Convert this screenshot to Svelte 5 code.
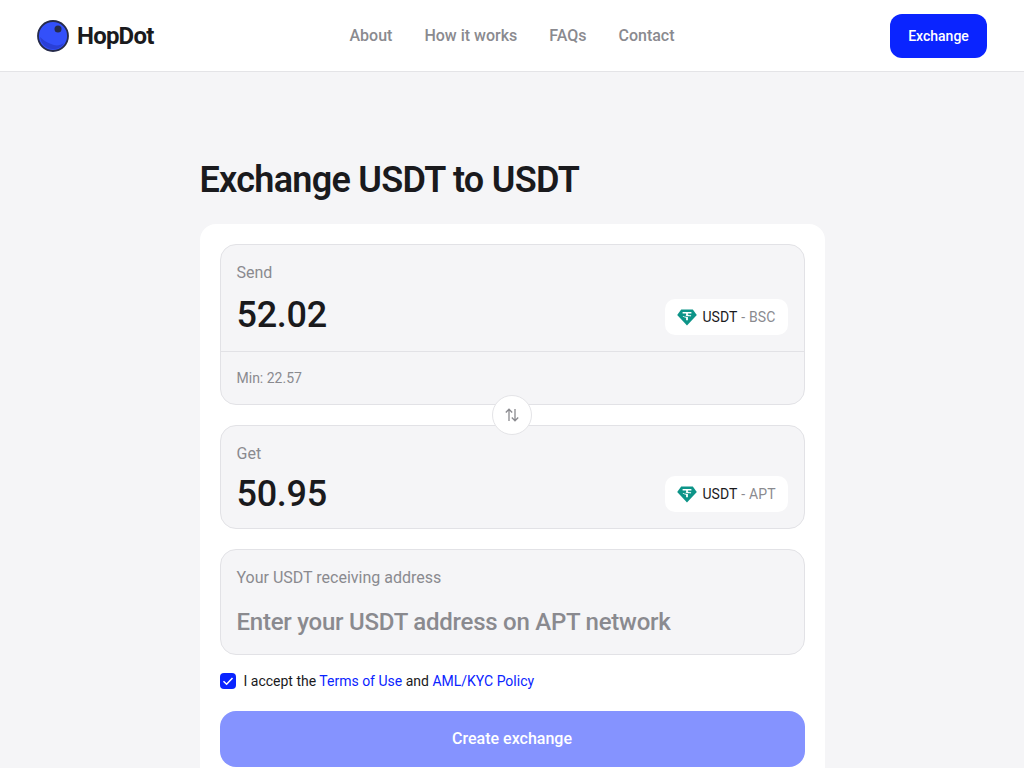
<script lang="ts">
	const nav = ["About", "How it works", "FAQs", "Contact"];
</script>

{#snippet tether()}
	<svg class="coin" viewBox="0 0 20 17" width="20" height="17">
		<path d="M4.2 .5h11.6l4 5.6L10 16.6.2 6.1z" fill="#0d9488" />
		<path
			d="M5.6 3h8.8v1.500h-3.500v1.200c1.900.1 3.400.5 3.400 1s-1.500.9-3.400 1v3.600H9.100V8.700c-1.900-.1-3.400-.5-3.400-1s1.500-.9 3.400-1V4.500H5.600z"
			fill="#fff"
		/>
		<path d="M6.800 7.100c.7.300 1.900.4 3.200.4s2.500-.1 3.200-.4" fill="none" stroke="#0d9488" stroke-width=".8" />
	</svg>
{/snippet}

<header>
	<a class="logo" href="#top">
		<svg viewBox="0 0 32 32" width="32" height="32">
			<circle cx="16" cy="16" r="15" fill="#3350fa" stroke="#262b4a" stroke-width="1.800" />
			<path d="M3 17c1 7 6 12 13 12 5 0 9-2 11-6-4 3-9 3-13 1-5-2-8-4-11-7z" fill="#2a3fd6" />
			<circle cx="21" cy="9" r="3.500" fill="#262b4a" />
		</svg>
		<span>HopDot</span>
	</a>
	<nav>
		{#each nav as item}
			<a href="#top">{item}</a>
		{/each}
	</nav>
	<button class="cta" type="button">Exchange</button>
</header>

<main>
	<h1>Exchange USDT to USDT</h1>
	<section class="card">
		<div class="box send">
			<div class="top">
				<label for="send">Send</label>
				<div class="row">
					<input id="send" value="52.02" />
					<button class="token" type="button">
						{@render tether()}
						<span>USDT</span><em>- BSC</em>
					</button>
				</div>
			</div>
			<div class="min">Min: 22.57</div>
		</div>

		<div class="swap-wrap">
			<button class="swap" type="button" aria-label="Swap">
				<svg viewBox="0 0 16 16" width="16" height="16" fill="none" stroke="#8a8a8f" stroke-width="1.300">
					<path d="M5 14V2.500M1.800 5.500 5 2.200l3.200 3.300" />
					<path d="M11 2v11.500M7.800 10.500l3.200 3.300 3.200-3.300" />
				</svg>
			</button>
		</div>

		<div class="box get">
			<label for="get">Get</label>
			<div class="row">
				<input id="get" value="50.95" />
				<button class="token" type="button">
					{@render tether()}
					<span>USDT</span><em>- APT</em>
				</button>
			</div>
		</div>

		<div class="box address">
			<label for="address">Your USDT receiving address</label>
			<input id="address" placeholder="Enter your USDT address on APT network" />
		</div>

		<div class="accept">
			<span class="check">
				<svg viewBox="0 0 16 16" width="16" height="16" fill="none" stroke="#fff" stroke-width="1.500">
					<path d="M3.500 8.300 6.600 11.200 12.500 5" />
				</svg>
			</span>
			<p>I accept the <a href="#top">Terms of Use</a> and <a href="#top">AML/KYC Policy</a></p>
		</div>

		<button class="submit" type="button">Create exchange</button>
	</section>
</main>

<style>
	:global(body) {
		background: #f5f5f7;
		font-family: Roboto, "Liberation Sans", sans-serif;
		color: #1a1a1d;
	}

	header {
		display: flex;
		align-items: center;
		justify-content: space-between;
		height: 71px;
		padding: 0 37px;
		background: #fff;
		border-bottom: 1px solid #e4e4e7;
		position: relative;
	}

	.logo {
		display: flex;
		align-items: center;
		gap: 8px;
		color: #1a1a1d;
		text-decoration: none;
		font-size: 24px;
		font-weight: 700;
		letter-spacing: -0.8px;
	}

	nav {
		position: absolute;
		left: 349.5px;
		top: 0;
		height: 71px;
		display: flex;
		align-items: center;
		gap: 32px;
		a {
			color: #8a8a8f;
			text-decoration: none;
			font-size: 16px;
			font-weight: 500;
		}
	}

	.cta {
		width: 97px;
		height: 44px;
		background: #0a24ff;
		color: #fff;
		border: 0;
		border-radius: 12px;
		font: 500 14px Roboto, sans-serif;
	}

	main {
		width: 625px;
		margin: 0 auto;
		padding: 86px 0 40px;
	}

	h1 {
		margin: 0 0 22px;
		font-size: 36px;
		line-height: 44px;
		font-weight: 600;
		letter-spacing: -0.72px;
	}

	.card {
		background: #fff;
		border-radius: 16px;
		padding: 20px;
		display: flex;
		flex-direction: column;
	}

	.box {
		background: #f5f5f7;
		border: 1px solid #e2e2e6;
		border-radius: 16px;
		label {
			display: block;
			color: #8a8a8f;
			font-size: 16px;
			line-height: 20px;
		}
		input {
			display: block;
			min-width: 0;
			flex: 1;
			border: 0;
			padding: 0;
			outline: 0;
			background: transparent;
			font-family: inherit;
			color: #1a1a1d;
		}
	}

	.row {
		display: flex;
		align-items: center;
		justify-content: space-between;
		input {
			font-size: 36px;
			font-weight: 500;
			height: 44px;
			letter-spacing: -0.3px;
		}
	}

	.send .top {
		padding: 18px 16px 16px;
		height: 107px;
		box-sizing: border-box;
		border-bottom: 1px solid #e2e2e6;
		.row {
			margin-top: 10px;
		}
		.token {
			top: 2px;
		}
	}

	.min {
		padding: 18px 16px 0;
		height: 52px;
		box-sizing: border-box;
		font-size: 14px;
		line-height: 16px;
		color: #8a8a8f;
	}

	.get {
		padding: 18px 16px 14px;
		height: 104px;
		box-sizing: border-box;
		.row {
			margin-top: 8px;
		}
	}

	.token {
		display: flex;
		align-items: center;
		height: 36px;
		width: 123px;
		padding: 0 12px;
		background: #fff;
		border: 0;
		border-radius: 10px;
		font: 400 14px Roboto, sans-serif;
		color: #1a1a1d;
		white-space: nowrap;
		position: relative;
		em {
			font-style: normal;
			color: #8a8a8f;
			margin-left: 4px;
			letter-spacing: 0.15px;
		}
	}

	.coin {
		flex: none;
		margin-right: 6px;
	}

	.swap-wrap {
		height: 20px;
		display: flex;
		align-items: center;
		justify-content: center;
		position: relative;
		z-index: 1;
	}

	.swap {
		width: 40px;
		height: 40px;
		flex: none;
		display: flex;
		align-items: center;
		justify-content: center;
		padding: 0;
		background: #fff;
		border: 1px solid #e4e4e7;
		border-radius: 50%;
	}

	.address {
		margin-top: 20px;
		height: 106px;
		box-sizing: border-box;
		padding: 18px 16px 0;
		input {
			width: 100%;
			height: 32px;
			margin-top: 18px;
			font-size: 24px;
			font-weight: 500;
			letter-spacing: -0.24px;
		}
		input::placeholder {
			color: #8a8a8f;
			opacity: 1;
		}
	}

	.accept {
		display: flex;
		align-items: center;
		gap: 8px;
		margin-top: 18px;
		height: 16px;
		p {
			margin: 0;
			font-size: 14px;
			line-height: 16px;
		}
		a {
			color: #0a24ff;
			text-decoration: none;
		}
	}

	.check {
		width: 16px;
		height: 16px;
		background: #0a24ff;
		border-radius: 4px;
		display: flex;
	}

	.submit {
		margin-top: 22px;
		height: 56px;
		padding: 0 0 2px;
		border: 0;
		border-radius: 16px;
		background: #8593ff;
		color: #fff;
		font: 500 16px Roboto, sans-serif;
	}
</style>
